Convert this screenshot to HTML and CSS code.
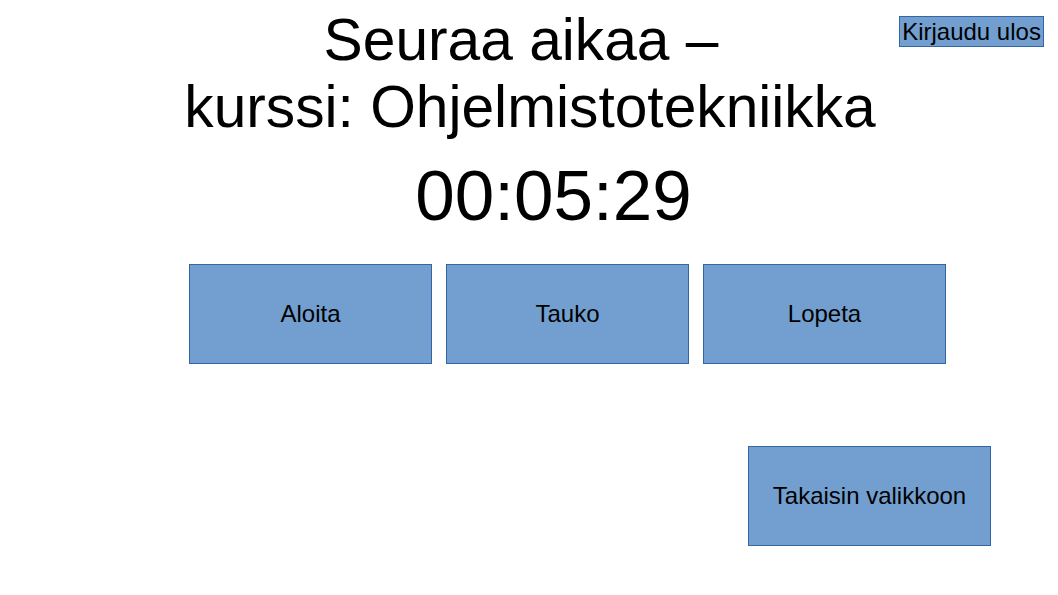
FILE: index.html
```html
<!DOCTYPE html>
<html lang="fi">
<head>
<meta charset="utf-8">
<title>Seuraa aikaa</title>
<link rel="stylesheet" href="styles.css">
</head>
<body>
<div class="page">
  <button class="btn logout">Kirjaudu ulos</button>
  <h1 class="title">
    <span class="title-line first">Seuraa aikaa –</span>
    <span class="title-line">kurssi: Ohjelmistotekniikka</span>
  </h1>
  <div class="timer">00:05:29</div>
  <div class="controls">
    <button class="btn big">Aloita</button>
    <button class="btn big">Tauko</button>
    <button class="btn big">Lopeta</button>
  </div>
  <div class="back-row">
    <button class="btn big">Takaisin valikkoon</button>
  </div>
</div>
</body>
</html>
```
FILE: styles.css
```css
html, body {
  margin: 0;
  padding: 0;
  background: #ffffff;
}
body {
  font-family: "Liberation Sans", Arial, sans-serif;
  color: #000000;
  width: 1058px;
  height: 595px;
  overflow: hidden;
}
.page {
  position: relative;
  padding-top: 6px;
}
.btn {
  font-family: "Liberation Sans", Arial, sans-serif;
  background: #729fcf;
  border: 1px solid #3465a4;
  color: #000000;
  padding: 0;
  margin: 0;
  display: flex;
  align-items: center;
  justify-content: center;
  box-sizing: border-box;
}
.logout {
  position: absolute;
  left: 899px;
  top: 16px;
  width: 145px;
  height: 31px;
  font-size: 24px;
}
.title {
  margin: 0;
  font-weight: normal;
  font-size: 58.7px;
  line-height: normal;
  display: flex;
  flex-direction: column;
  align-items: center;
  padding-left: 2px;
}
.title-line.first {
  padding-right: 18px;
}
.timer {
  margin-top: 15px;
  font-size: 71px;
  text-align: center;
  padding-left: 49px;
  line-height: normal;
}
.controls {
  display: flex;
  gap: 14px;
  margin-top: 28px;
  padding-left: 189px;
}
.big {
  width: 243px;
  height: 100px;
  font-size: 24px;
}
.back-row {
  display: flex;
  margin-top: 82px;
  padding-left: 748px;
}
```
